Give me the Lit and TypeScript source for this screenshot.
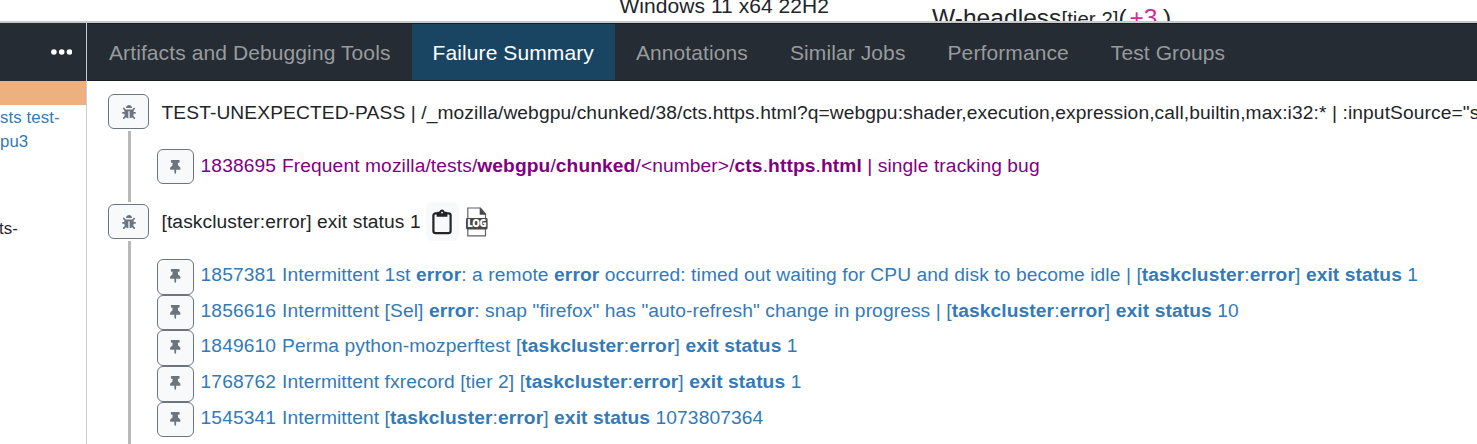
import { LitElement, html, css } from "lit";
import { customElement } from "lit/decorators.js";

interface Bug { id: string; text: string; }

const bugs: Bug[] = [
  { id: "1857381", text: 'Intermittent 1st *error*: a remote *error* occurred: timed out waiting for CPU and disk to become idle | [*taskcluster*:*error*] *exit* *status* 1' },
  { id: "1856616", text: 'Intermittent [Sel] *error*: snap "firefox" has "auto-refresh" change in progress | [*taskcluster*:*error*] *exit* *status* 10' },
  { id: "1849610", text: "Perma python-mozperftest [*taskcluster*:*error*] *exit* *status* 1" },
  { id: "1768762", text: "Intermittent fxrecord [tier 2] [*taskcluster*:*error*] *exit* *status* 1" },
  { id: "1545341", text: "Intermittent [*taskcluster*:*error*] *exit* *status* 1073807364" },
];

const tracked: Bug[] = [
  { id: "1838695", text: "Frequent mozilla/tests/*webgpu*/*chunked*/<number>/*cts*.*https*.*html* | single tracking bug" },
];

const tabs = ["Artifacts and Debugging Tools", "Failure Summary", "Annotations", "Similar Jobs", "Performance", "Test Groups"];

// Odd segments between asterisks are the matched search terms.
const highlight = (text: string) =>
  text.split("*").map((part, i) => (i % 2 ? html`<b>${part}</b>` : part));

const bugIcon = html`<svg class="bug" viewBox="0 0 512 512"><path d="M511.988 288.9c-.478 17.43-15.217 31.1-32.653 31.1H424v16c0 21.864-4.882 42.584-13.6 61.145l60.228 60.228c12.496 12.497 12.496 32.758 0 45.255-12.498 12.497-32.759 12.496-45.256 0l-54.736-54.736C345.886 467.965 314.351 480 280 480V236c0-6.627-5.373-12-12-12h-24c-6.627 0-12 5.373-12 12v244c-34.351 0-65.886-12.035-90.636-32.108l-54.736 54.736c-12.498 12.497-32.759 12.496-45.256 0-12.496-12.497-12.496-32.758 0-45.255l60.228-60.228C92.882 378.584 88 357.864 88 336v-16H32.666C15.23 320 .491 306.33.013 288.9-.484 270.816 14.028 256 32 256h56v-58.745l-46.628-46.628c-12.496-12.497-12.496-32.758 0-45.255 12.498-12.497 32.758-12.497 45.256 0L141.255 160h229.489l54.627-54.627c12.498-12.497 32.758-12.497 45.256 0 12.496 12.497 12.496 32.758 0 45.255L424 197.255V256h56c17.972 0 32.484 14.816 31.988 32.9zM257 0c-61.856 0-112 50.144-112 112h224C369 50.144 318.856 0 257 0z"/></svg>`;

const pinIcon = html`<svg class="pin" viewBox="0 0 384 512"><path d="M298.028 214.267L285.793 96H328c13.255 0 24-10.745 24-24V24c0-13.255-10.745-24-24-24H56C42.745 0 32 10.745 32 24v48c0 13.255 10.745 24 24 24h42.207L85.972 214.267C37.465 236.82 0 277.261 0 328c0 13.255 10.745 24 24 24h136v104.007c0 1.242.289 2.467.845 3.578l24 48c2.941 5.882 11.364 5.893 14.311 0l24-48a8.008 8.008 0 0 0 .845-3.578V352h136c13.255 0 24-10.745 24-24-.001-51.183-37.983-91.42-85.973-113.733z"/></svg>`;

const clipboardIcon = html`<svg class="clipboard" viewBox="0 0 20 26"><rect x="1.400" y="4.400" width="17.200" height="19.800" rx="2.200" fill="none" stroke="#212529" stroke-width="2.200"/><path fill="#212529" d="M4.600 4.400c0-1 .7-1.600 1.600-1.600h1.100C7.600 1.300 8.600.4 10 .4s2.400.9 2.700 2.400h1.100c.9 0 1.600.6 1.600 1.600v3.400H4.600z"/><circle cx="10" cy="3.600" r=".9" fill="#fff"/></svg>`;

const logIcon = html`<svg class="log" viewBox="0 0 24 30"><path fill="#fff" stroke="#606060" stroke-width="1.200" d="M2.800 1h12.700l5 6v21.800H2.800z"/><path fill="#484848" d="M14.700.6v7.200h6.600z"/><rect x="1" y="11" width="21.600" height="11.400" rx="1.400" fill="#484848"/><text x="11.600" y="20.300" text-anchor="middle">LOG</text></svg>`;

@customElement("app-root")
export class AppRoot extends LitElement {
  static styles = css`
    :host { display: flex; flex-direction: column; height: 444px; overflow: hidden; background: #fff; color: #212529; font-family: "Liberation Sans", Arial, sans-serif; font-size: 19.2px; letter-spacing: 0.1px; }
    * { box-sizing: border-box; }
    .pushes { display: flex; flex: none; height: 21px; overflow: hidden; white-space: nowrap; align-items: flex-start; }
    .platform { flex: none; width: 312.5px; margin-left: 619.5px; font-size: 21px; letter-spacing: 0.05px; line-height: 24px; margin-top: -6px; }
    .group { font-size: 24.5px; letter-spacing: 0.05px; line-height: 28px; margin-top: 4px; }
    .tier { font-size: 20.4px; }
    .count { color: #d8289c; padding: 0 5.5px 0 2.7px; }
    .details { display: flex; flex: 1; min-height: 0; border-top: 2px solid #c8c8c8; }
    .side { flex: none; width: 87px; border-right: 1px solid #ccc; overflow: hidden; }
    .bar { display: flex; height: 58px; background: #252c33; border-top: 1px solid #1a1f24; border-bottom: 1px solid #1a1f24; }
    .main .bar { padding-left: 1px; }
    .side .bar { justify-content: flex-end; align-items: center; padding: 0 13.7px 1px 0; border-color: #252c33; }
    .dots { width: 21.4px; height: 6px; fill: #fff; }
    .result { height: 24px; background: #edb07f; }
    .job { font-size: 16.8px; line-height: 24px; padding-top: 1px; white-space: nowrap; color: #337ab7; }
    .task { font-size: 16.8px; line-height: 24px; margin: 63px 0 0 -1px; }
    .main { flex: 1; min-width: 0; overflow: hidden; }
    .tab { display: flex; align-items: center; padding: 2px 21px 0; font-size: 21px; letter-spacing: 0.1px; color: #989b9d; white-space: nowrap; }
    .tab.active { background: #1a4562; color: #fff; }
    .list { padding: 13px 0 0 21px; }
    .line { display: flex; align-items: center; height: 35px; white-space: nowrap; }
    .line span { padding-top: 1.5px; }
    .line.first span { padding-top: 3px; letter-spacing: 0.107px; }
    .btn { display: flex; flex: none; align-items: center; justify-content: center; width: 41px; height: 35px; margin-right: 12.5px; border: 1px solid #6c757d; border-radius: 6px; background: #f8f9fa; fill: #6c757d; }
    .bug { width: 14px; height: 14px; }
    .pin { width: 10.5px; height: 14px; }
    .copy { display: flex; flex: none; align-items: center; justify-content: center; width: 33px; height: 39px; margin-left: 5px; border-radius: 6px; background: #f8f9fa; }
    .clipboard { width: 20px; height: 26px; }
    .log { width: 24px; height: 30px; margin-left: 6.5px; }
    .log text { font: 800 9.6px "Open Sans", sans-serif; letter-spacing: -0.5px; fill: #fff; }
    .suggestions { height: 71px; margin: 2px 0 2px 20px; border-left: 3px solid #b8b8b8; padding: 18px 0 0 26px; }
    .suggestions.long { height: 260px; }
    .item { display: flex; height: 35.7px; white-space: nowrap; color: #337ab7; }
    .item .btn { width: 37px; height: 35.5px; margin-right: 6.6px; padding-bottom: 1.5px; }
    .item.seen .btn { height: 35px; padding-bottom: 0; }
    .item span { line-height: 31px; }
    .item.seen span { line-height: 33px; }
    .id { margin-right: 6px; }
    .seen { color: #800080; }
  `;

  private item(bug: Bug, seen = false) {
    return html`<div class="item ${seen ? "seen" : ""}"><div class="btn">${pinIcon}</div><span class="id">${bug.id}</span><span>${highlight(bug.text)}</span></div>`;
  }

  render() {
    return html`
      <div class="pushes">
        <div class="platform">Windows 11 x64 22H2</div>
        <div class="group">W-headless<span class="tier">[tier 2]</span>(<span class="count">+3</span>)</div>
      </div>
      <div class="details">
        <div class="side">
          <div class="bar"><svg class="dots" viewBox="0 0 21.4 6"><circle cx="2.9" cy="3" r="2.8"/><circle cx="10.7" cy="3" r="2.8"/><circle cx="18.5" cy="3" r="2.8"/></svg></div>
          <div class="result"></div>
          <div class="job">sts test-<br>pu3</div>
          <div class="task">ts-</div>
        </div>
        <div class="main">
          <div class="bar">${tabs.map((t, i) => html`<div class="tab ${i === 1 ? "active" : ""}">${t}</div>`)}</div>
          <div class="list">
            <div class="line first"><div class="btn">${bugIcon}</div><span>TEST-UNEXPECTED-PASS | /_mozilla/webgpu/chunked/38/cts.https.html?q=webgpu:shader,execution,expression,call,builtin,max:i32:* | :inputSource="s</span></div>
            <div class="suggestions">${tracked.map((b) => this.item(b, true))}</div>
            <div class="line"><div class="btn">${bugIcon}</div><span>[taskcluster:error] exit status 1</span><div class="copy">${clipboardIcon}</div>${logIcon}</div>
            <div class="suggestions long">${bugs.map((b) => this.item(b))}</div>
          </div>
        </div>
      </div>`;
  }
}
